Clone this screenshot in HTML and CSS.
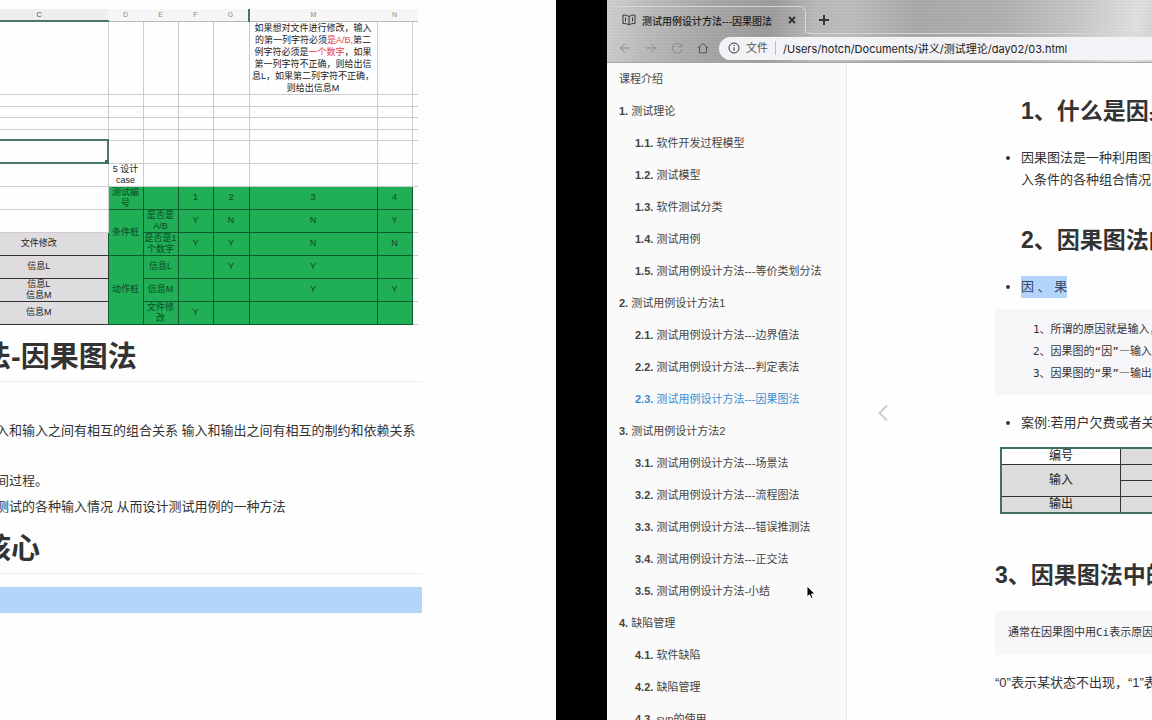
FILE: index.html
```html
<!DOCTYPE html>
<html lang="zh-CN">
<head>
<meta charset="utf-8">
<title>测试用例设计方法---因果图法</title>
<link rel="stylesheet" href="styles.css">
</head>
<body>
<div class="desktop">
  <section class="notes">
    <table class="sheet">
      <colgroup><col class="col-c"><col class="col-s"><col class="col-s"><col class="col-s"><col class="col-g"><col class="col-m"><col class="col-s"><col class="col-end"></colgroup>
      <thead>
        <tr class="letters"><th class="active">C</th><th>D</th><th>E</th><th>F</th><th class="mark">G</th><th>M</th><th>N</th><th></th></tr>
      </thead>
      <tbody>
        <tr class="tall"><td></td><td></td><td></td><td></td><td></td><td class="brief">如果想对文件进行修改，输入<br>的第一列字符必须<em>是A/B,</em>第二<br>例字符必须是<em>一个数字</em>，如果<br>第一列字符不正确，则给出信<br>息L，如果第二列字符不正确，<br>则给出信息M</td><td></td><td></td></tr>
        <tr class="short"><td></td><td></td><td></td><td></td><td></td><td></td><td></td><td></td></tr>
        <tr class="short"><td></td><td></td><td></td><td></td><td></td><td></td><td></td><td></td></tr>
        <tr class="short"><td></td><td></td><td></td><td></td><td></td><td></td><td></td><td></td></tr>
        <tr class="short"><td></td><td></td><td></td><td></td><td></td><td></td><td></td><td></td></tr>
        <tr><td class="selected"><span class="handle"></span></td><td></td><td></td><td></td><td></td><td></td><td></td><td></td></tr>
        <tr><td></td><td>5 设计<br>case</td><td></td><td></td><td></td><td></td><td></td><td></td></tr>
        <tr><td></td><td class="g">测试编<br>号</td><td class="g"></td><td class="g">1</td><td class="g">2</td><td class="g">3</td><td class="g">4</td><td></td></tr>
        <tr><td></td><td class="g" rowspan="2">条件桩</td><td class="g">是否是<br>A/B</td><td class="g">Y</td><td class="g">N</td><td class="g">N</td><td class="g">Y</td><td></td></tr>
        <tr><td class="k">文件修改</td><td class="g">是否是1<br>个数字</td><td class="g">Y</td><td class="g">Y</td><td class="g">N</td><td class="g">N</td><td></td></tr>
        <tr><td class="k">信息L</td><td class="g" rowspan="3">动作桩</td><td class="g">信息L</td><td class="g"></td><td class="g">Y</td><td class="g">Y</td><td class="g"></td><td></td></tr>
        <tr><td class="k">信息L<br>信息M</td><td class="g">信息M</td><td class="g"></td><td class="g"></td><td class="g">Y</td><td class="g">Y</td><td></td></tr>
        <tr><td class="k">信息M</td><td class="g">文件修<br>改</td><td class="g">Y</td><td class="g"></td><td class="g"></td><td class="g"></td><td></td></tr>
      </tbody>
    </table>
    <article class="outline">
      <h1>法-因果图法</h1>
      <p class="lead">入和输入之间有相互的组合关系 输入和输出之间有相互的制约和依赖关系</p>
      <p>间过程。</p>
      <p>测试的各种输入情况 从而设计测试用例的一种方法</p>
      <h1 class="core">核心</h1>
      <div class="selection"></div>
    </article>
  </section>

  <section class="browser">
    <header class="chrome">
      <div class="tabs">
        <div class="tab">
          <svg class="book" viewBox="0 0 14 12" width="14" height="12"><path d="M7 2.500C5.500 1.500 3.500 1 1 1v8.500c2.500 0 4.500.3 6 1.500 1.500-1.200 3.500-1.500 6-1.500V1C10.500 1 8.500 1.500 7 2.500zM7 2.500V11M3.500 3.500v4M10.500 3.500v4"/></svg>
          <span class="tab-title">测试用例设计方法---因果图法</span>
          <button class="icon" aria-label="关闭"><svg viewBox="0 0 8 8" width="8" height="8"><path class="heavy" d="M1 1l6 6M7 1L1 7"/></svg></button>
        </div>
        <div class="strip"><button class="icon plus" aria-label="新标签页"><svg viewBox="0 0 12 12" width="12" height="12"><path class="mid" d="M6 1v10M1 6h10"/></svg></button></div>
      </div>
      <div class="toolbar">
        <button class="icon dim" aria-label="后退"><svg viewBox="0 0 12 12" width="12" height="12"><path d="M11 6H1.500M6 1.500L1.500 6 6 10.500"/></svg></button>
        <button class="icon dim" aria-label="前进"><svg viewBox="0 0 12 12" width="12" height="12"><path d="M1 6h9.500M6 1.500L10.500 6 6 10.500"/></svg></button>
        <button class="icon dim" aria-label="刷新"><svg viewBox="0 0 12 12" width="12" height="12"><path d="M10 3.500A4.800 4.800 0 1 0 10.800 7M11 1v3.500H7.500"/></svg></button>
        <button class="icon home" aria-label="主页"><svg viewBox="0 0 12 12" width="12" height="12"><path d="M1 6l5-4.700L11 6M2.500 5v5.800h7V5"/></svg></button>
        <label class="address">
          <svg viewBox="0 0 12 12" width="12" height="12"><circle cx="6" cy="6" r="5"/><path d="M6 5.300v3.500M6 3v1.200"/></svg>
          <span class="scheme">文件</span>
          <input type="text" value="/Users/hotch/Documents/讲义/测试理论/day02/03.html">
        </label>
      </div>
    </header>
    <div class="page">
      <nav class="summary">
        <ul>
          <li><a href="#">课程介绍</a></li>
          <li><a href="#"><b>1.</b> 测试理论</a></li>
          <li class="sub"><a href="#"><b>1.1.</b> 软件开发过程模型</a></li>
          <li class="sub"><a href="#"><b>1.2.</b> 测试模型</a></li>
          <li class="sub"><a href="#"><b>1.3.</b> 软件测试分类</a></li>
          <li class="sub"><a href="#"><b>1.4.</b> 测试用例</a></li>
          <li class="sub"><a href="#"><b>1.5.</b> 测试用例设计方法---等价类划分法</a></li>
          <li><a href="#"><b>2.</b> 测试用例设计方法1</a></li>
          <li class="sub"><a href="#"><b>2.1.</b> 测试用例设计方法---边界值法</a></li>
          <li class="sub"><a href="#"><b>2.2.</b> 测试用例设计方法---判定表法</a></li>
          <li class="sub"><a class="current" href="#"><b>2.3.</b> 测试用例设计方法---因果图法</a></li>
          <li><a href="#"><b>3.</b> 测试用例设计方法2</a></li>
          <li class="sub"><a href="#"><b>3.1.</b> 测试用例设计方法---场景法</a></li>
          <li class="sub"><a href="#"><b>3.2.</b> 测试用例设计方法---流程图法</a></li>
          <li class="sub"><a href="#"><b>3.3.</b> 测试用例设计方法---错误推测法</a></li>
          <li class="sub"><a href="#"><b>3.4.</b> 测试用例设计方法---正交法</a></li>
          <li class="sub"><a href="#"><b>3.5.</b> 测试用例设计方法-小结</a></li>
          <li><a href="#"><b>4.</b> 缺陷管理</a></li>
          <li class="sub"><a href="#"><b>4.1.</b> 软件缺陷</a></li>
          <li class="sub"><a href="#"><b>4.2.</b> 缺陷管理</a></li>
          <li class="sub"><a href="#"><b>4.3.</b> svn的使用</a></li>
        </ul>
      </nav>
      <div class="pager"><a href="#" aria-label="上一页"><svg viewBox="0 0 12 18" width="12" height="18"><path d="M10 1.500L2.500 9l7.500 7.500"/></svg></a></div>
      <main class="content">
        <h2 class="inset">1、什么是因果图</h2>
        <ul><li>因果图法是一种利用图解<br>入条件的各种组合情况</li></ul>
        <h2 class="inset">2、因果图法的</h2>
        <ul><li><mark>因 、 果</mark></li></ul>
        <pre class="reasons">1、所谓的原因就是输入，
2、因果图的“因”<span class="dash">—</span>输入
3、因果图的“果”<span class="dash">—</span>输出</pre>
        <ul><li>案例:若用户欠费或者关</li></ul>
        <div class="figure">
          <table class="case">
            <tr><td class="blank">编号</td><td></td></tr>
            <tr><td rowspan="2">输入</td><td></td></tr>
            <tr><td></td></tr>
            <tr><td>输出</td><td></td></tr>
          </table>
        </div>
        <h2>3、因果图法中的</h2>
        <pre class="note">通常在因果图中用Ci表示原因</pre>
        <p>“0”表示某状态不出现，“1”表</p>
      </main>
    </div>
  </section>
  <svg class="pointer" viewBox="0 0 10 15" width="10" height="15"><path d="M1 1v11l2.500-2.300L5.200 13.500l1.800-.8-1.600-3.600H9z"/></svg>
</div>
</body>
</html>
```
FILE: styles.css
```css
* { box-sizing: border-box; }
body {
  margin: 0;
  background: #000;
  color: #333;
  font-family: "Liberation Sans", "Noto Sans CJK SC", sans-serif;
  font-size: 13px;
}
.desktop {
  position: relative;
  display: grid;
  grid-template-columns: 556fr 545fr;
  column-gap: 51px;
  height: 100vh;
  overflow: hidden;
}
ul { list-style: none; margin: 0; padding: 0; }
a { color: inherit; text-decoration: none; }

/* left: notes with the spreadsheet */
.notes { background: #fefefe; padding-top: 9px; overflow: hidden; min-width: 0; }
.sheet {
  width: 418px;
  table-layout: fixed;
  border-collapse: collapse;
  font: 9px/11px "Liberation Sans", "Noto Sans CJK SC", sans-serif;
  text-align: center;
  color: #222;
}
.col-c { width: 108px; }
.col-s { width: 35px; }
.col-g { width: 36px; }
.col-m { width: 128px; }
.col-end { width: 6px; }
.sheet th {
  height: 12px;
  padding: 0;
  background: #f6f6f6;
  border-bottom: 1px solid #b4bab8;
  color: #888;
  font-size: 7px;
  font-weight: 400;
}
.sheet th.active { border-bottom: 2px solid #48796a; background: #eee; color: #444; }
.sheet th.mark { border-right: 2px solid #3c7b5f; }
.sheet td { height: 23px; padding: 0; border: 1px solid #cdcbd0; white-space: nowrap; }
.sheet th:first-child, .sheet td.k { padding-right: 30px; }
.sheet td:first-child { border-left: 0; }
.sheet td:last-child { border-right: 0; }
.sheet .tall td { height: 73px; }
.sheet .short td { height: 12px; font-size: 1px; line-height: 1px; }
.sheet .short:nth-child(odd) td { height: 11px; }
.sheet .brief { line-height: 12px; }
.sheet em { color: #e0404c; font-style: normal; }
.sheet td.selected { position: relative; border: 2px solid #48796a; border-left: 0; }
.handle {
  position: absolute;
  right: -2px;
  bottom: -2px;
  width: 4px;
  height: 4px;
  background: #3c6f5c;
}
.sheet td.g { background: #20ae56; border-color: #0c5c2c; color: #0b4a24; }
.sheet td.k { background: #dedcdf; border-color: #333; }

.outline { width: 440px; margin-left: -18px; white-space: nowrap; }
.outline h1 {
  margin: 0;
  padding: 11px 0 2px;
  border-bottom: 1px solid #eee;
  font-size: 29px;
  line-height: 43px;
}
.outline p { margin: 0; padding-left: 14px; line-height: 26px; }
.outline .lead { padding-top: 36px; padding-bottom: 24px; }
.outline .core { padding-top: 8px; }
.selection { height: 26px; margin-top: 13px; background: #b4d5fb; }

/* right: browser window */
.browser { display: flex; flex-direction: column; min-width: 0; min-height: 0; background: #fefefe; }
.chrome {
  flex: none;
  height: 63px;
  background:
    repeating-linear-gradient(180deg, rgba(255,255,255,.05) 0 1px, rgba(0,0,0,.01) 1px 3px),
    linear-gradient(100deg, #cfcecf 0%, #b9b8b9 9%, #a6a5a6 20%, #9b9a9b 30%, #b9b8b9 38%, #bdbcbd 44%, #a9a8a9 56%, #b0afb0 72%, #c4c3c4 84%, #e0dfe0 96%, #d2d1d2 100%);
  border-bottom: 1px solid #a5a4a6;
}
.icon { display: flex; padding: 0; border: 0; background: none; }
.chrome svg { flex: none; fill: none; stroke: #333; stroke-width: 1; }
.chrome .heavy { stroke-width: 2; }
.chrome .mid { stroke-width: 2; }
.chrome .dim svg { stroke: #888; }
.chrome .home svg { stroke: #555; }
.tabs { display: flex; height: 34px; padding: 6px 0 0 6px; }
.tab {
  display: flex;
  flex: none;
  align-items: center;
  width: 193px;
  height: 27px;
  padding: 0 9px;
  border-top: 1px solid #d8d8d8;
  border-right: 1px solid #d8d8d8;
  border-radius: 0 6px 0 0;
}
.tab-title { flex: 1; margin-left: 6px; font-size: 10px; font-weight: 500; color: #222; white-space: nowrap; }
.strip {
  display: flex;
  flex: 1;
  align-items: center;
  height: 28px;
  margin-left: -1px;
  padding-left: 12px;
  border-bottom: 1px solid #d8d8d8;
  border-left: 1px solid transparent;
  border-radius: 0 0 0 6px;
}
.toolbar { display: flex; align-items: center; gap: 14px; padding-left: 12px; height: 28px; }
.address {
  display: flex;
  flex: 1;
  align-items: center;
  height: 23px;
  min-width: 0;
  margin-left: -4px;
  padding-left: 9px;
  border-radius: 12px 0 0 12px;
  background: #f3f2f6;
  overflow: hidden;
}
.scheme { margin: 0 7px 0 6px; padding-right: 7px; border-right: 1px solid #bbb; font-size: 11px; line-height: 14px; color: #555; white-space: nowrap; }
.address input {
  flex: 1;
  min-width: 0;
  padding: 0;
  border: 0;
  background: none;
  color: #222;
  font: 11px Inter, "Noto Sans CJK SC", sans-serif;
}

.page { display: flex; flex: 1; min-height: 0; overflow: hidden; }
.summary { flex: none; width: 240px; border-right: 1px solid #e6e6e6; background: #fafafa; }
.summary li { padding-left: 12px; font-size: 11px; line-height: 32px; color: #444; white-space: nowrap; }
.summary .sub { padding-left: 28px; }
.summary .current { color: #3a8cd0; }
.pager { flex: none; width: 148px; padding: 341px 0 0 30px; }
.pager svg { fill: none; stroke: #ccc; stroke-width: 2; }

.content { flex: 1; min-width: 0; padding-top: 4px; overflow: hidden; white-space: nowrap; line-height: 22px; }
.content h2 { margin: 0; padding: 27px 0 19px; font-size: 23px; line-height: 34px; }
.content .inset { padding-left: 26px; }
.content li { display: list-item; list-style: disc; margin-left: 26px; padding-bottom: 5px; }
.content mark { display: inline-block; background: #b4d5fb; color: #2f4a66; }
.content pre {
  margin: 0;
  padding: 11px 13px;
  background: #f7f6f9;
  font: 11px/22px "DejaVu Sans Mono", "Noto Sans CJK SC", monospace;
}
.content .dash { font-family: "Noto Sans CJK SC", sans-serif; line-height: 1; }
.content .reasons { margin: 6px 0 17px; padding: 10px 38px; }
.content p { margin: 17px 0; }
.figure { padding: 8px 0 17px 5px; overflow: hidden; }
.case {
  width: 360px;
  border: 2px solid #3f7059;
  border-collapse: collapse;
  font-size: 12px;
  line-height: 15px;
  text-align: center;
  color: #222;
}
.case td { width: 120px; height: 16px; padding: 0; border: 1px solid #333; background: #dcdcdc; }
.case td:last-child { width: 240px; }
.case .blank { background: #fefefe; }

.pointer { position: absolute; left: 806px; top: 585px; fill: #000; stroke: #fff; stroke-width: 1; }
```
